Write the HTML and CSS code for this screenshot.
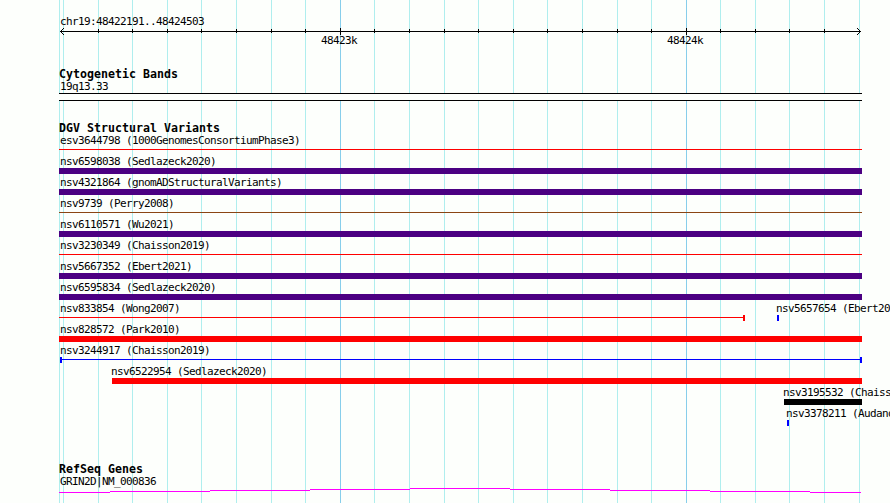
FILE: index.html
```
<!DOCTYPE html>
<html lang="en">
<head>
    <meta charset="UTF-8">
    <title>chr19:48422191..48424503</title>
    <link rel="stylesheet" href="styles.css">
</head>
<body>
    <!-- grid lines behind the tracks -->
    <svg class="grid" width="890" height="503" shape-rendering="crispEdges">
        <path class="minor" d="M59.5 0V503M63.5 0V503M98.5 0V503M132.5 0V503M167.5 0V503M201.5 0V503M236.5 0V503M271.5 0V503M305.5 0V503M374.5 0V503M409.5 0V503M444.5 0V503M478.5 0V503M513.5 0V503M547.5 0V503M582.5 0V503M617.5 0V503M651.5 0V503M720.5 0V503M755.5 0V503M789.5 0V503M824.5 0V503M859.5 0V503"/>
        <path class="major" d="M340.5 0V503M686.5 0V503"/>
    </svg>
    <main>
        <section class="ruler">
            <div class="label">chr19:48422191..48424503</div>
            <svg class="scale" width="803" height="9" viewBox="59 27 803 9" shape-rendering="crispEdges">
                <path d="M60 31.5H861"/>
                <path d="M98.5 29V33M132.5 29V33M167.5 29V33M201.5 29V33M236.5 29V33M271.5 29V33M305.5 29V33M374.5 29V33M409.5 29V33M444.5 29V33M478.5 29V33M513.5 29V33M547.5 29V33M582.5 29V33M617.5 29V33M651.5 29V33M720.5 29V33M755.5 29V33M789.5 29V33M824.5 29V33"/>
                <path d="M340.5 28V35M686.5 28V35"/>
                <path d="M61 30.5H62M62 29.5H63M63 28.5H64M61 32.5H62M62 33.5H63M63 34.5H64"/>
                <path d="M859 30.5H860M858 29.5H859M857 28.5H858M859 32.5H860M858 33.5H859M857 34.5H858"/>
            </svg>
            <div class="ticks">
                <span class="label">48423k</span>
                <span class="label">48424k</span>
            </div>
        </section>

        <section class="cyto">
            <h2>Cytogenetic Bands</h2>
            <div class="label">19q13.33</div>
            <div class="band"></div>
        </section>

        <section class="variants">
            <h2>DGV Structural Variants</h2>
            <div class="row"><div class="feature"><div class="label">esv3644798 (1000GenomesConsortiumPhase3)</div><div class="line red"></div></div></div>
            <div class="row"><div class="feature"><div class="label">nsv6598038 (Sedlazeck2020)</div><div class="bar indigo"></div></div></div>
            <div class="row"><div class="feature"><div class="label">nsv4321864 (gnomADStructuralVariants)</div><div class="bar indigo"></div></div></div>
            <div class="row"><div class="feature"><div class="label">nsv9739 (Perry2008)</div><div class="line brown"></div></div></div>
            <div class="row"><div class="feature"><div class="label">nsv6110571 (Wu2021)</div><div class="bar indigo"></div></div></div>
            <div class="row"><div class="feature"><div class="label">nsv3230349 (Chaisson2019)</div><div class="line red"></div></div></div>
            <div class="row"><div class="feature"><div class="label">nsv5667352 (Ebert2021)</div><div class="bar indigo"></div></div></div>
            <div class="row"><div class="feature"><div class="label">nsv6595834 (Sedlazeck2020)</div><div class="bar indigo"></div></div></div>
            <div class="row split">
                <div class="feature"><div class="label">nsv833854 (Wong2007)</div><div class="span"><div class="line red"></div><div class="cap red"></div></div></div>
                <div class="feature"><div class="label">nsv5657654 (Ebert2021)</div><div class="cap blue"></div></div>
            </div>
            <div class="row"><div class="feature"><div class="label">nsv828572 (Park2010)</div><div class="bar red"></div></div></div>
            <div class="row"><div class="feature"><div class="label">nsv3244917 (Chaisson2019)</div><div class="span both"><div class="cap blue"></div><div class="line blue"></div><div class="cap blue"></div></div></div></div>
            <div class="row from-6522954"><div class="feature"><div class="label">nsv6522954 (Sedlazeck2020)</div><div class="bar red"></div></div></div>
            <div class="row from-3195532"><div class="feature"><div class="label">nsv3195532 (Chaisson2019)</div><div class="bar black"></div></div></div>
            <div class="row from-3378211"><div class="feature"><div class="label">nsv3378211 (Audano2019)</div><div class="cap blue"></div></div></div>
        </section>

        <section class="genes">
            <h2>RefSeq Genes</h2>
            <div class="label">GRIN2D|NM_000836</div>
            <svg class="gene" width="803" height="5" viewBox="59 488 803 5" shape-rendering="crispEdges">
                <path d="M59 492.5H110M110 491.5H210M210 490.5H310M310 489.5H410M410 488.5H510M510 489.5H610M610 490.5H710M710 491.5H810M810 492.5H861"/>
            </svg>
        </section>
    </main>
</body>
</html>
```
FILE: styles.css
```
body {
    margin: 0;
    width: 890px;
    height: 503px;
    overflow: hidden;
    position: relative;
    background-color: #fdfffc;
    color: #000;
    font-family: "DejaVu Sans Mono", monospace;
}

svg {
    display: block;
    fill: none;
}

.grid {
    position: absolute;
    top: 0;
    left: 0;
}

.minor {
    stroke: #afeeee;
}

.major {
    stroke: #87ceeb;
}

main {
    position: relative;
    width: 803px;
    padding: 15px 0 0 59px;
}

h2 {
    margin: 0;
    height: 12px;
    font-size: 11.6px;
    line-height: 12px;
    letter-spacing: 0.016px;
    font-weight: bold;
    white-space: nowrap;
}

.label {
    height: 12px;
    padding-left: 1px;
    font-size: 11px;
    line-height: 14px;
    letter-spacing: -0.622px;
    white-space: nowrap;
}

.ruler {
    height: 53px;
}

.scale {
    stroke: #000;
}

.ticks {
    display: flex;
    gap: 309px;
    padding-left: 261px;
    margin-top: -2px;
}

.ticks .label {
    width: 36px;
}

.cyto {
    height: 54px;
}

.band {
    height: 6px;
    margin-top: 1px;
    border-top: 1px solid #000;
    border-bottom: 1px solid #000;
    background-color: #fdfffc;
}

.variants {
    height: 341px;
}

.row {
    height: 21px;
}

.feature .label {
    height: 13px;
}

.bar {
    height: 6px;
}

.line {
    height: 1px;
    margin-top: 2px;
}

.cap {
    width: 2px;
    height: 6px;
}

.span {
    display: flex;
}

.span .line {
    flex: 1;
}

.both {
    padding-left: 1px;
}

.split {
    display: flex;
}

.split .feature {
    flex-shrink: 0;
}

.split .feature:first-child {
    width: 686px;
    margin-right: 32px;
}

.from-6522954 {
    padding-left: 53px;
}

.from-3195532 {
    padding-left: 725px;
}

.from-3378211 {
    padding-left: 728px;
}

.split .feature:last-child .label,
.from-6522954 .label,
.from-3195532 .label,
.from-3378211 .label {
    padding-left: 0;
    margin-left: -1px;
}

.red {
    background-color: #f00;
}

.blue {
    background-color: #00f;
}

.indigo {
    background-color: #4b0082;
}

.brown {
    background-color: #8b4513;
}

.black {
    background-color: #000;
}

.gene {
    stroke: #f0f;
    margin-top: 1px;
}
```
